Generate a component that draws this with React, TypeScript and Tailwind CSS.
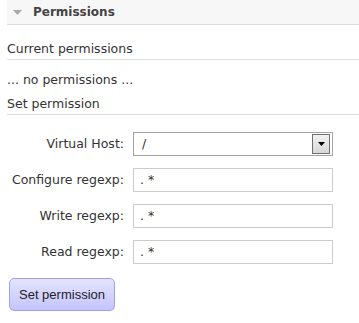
import React from "react";

const font = { fontFamily: '"DejaVu Sans", Verdana, sans-serif' };

function Row({ label, children }: { label: string; children: React.ReactNode }) {
  return (
    <div className="flex items-center h-[24px]">
      <div className="w-[124px] text-right text-[12.5px] text-[#333] whitespace-nowrap">{label}</div>
      <div className="ml-[9px]">{children}</div>
    </div>
  );
}

function Input({ value }: { value: string }) {
  return (
    <div className="w-[200px] h-[24px] border border-[#ccc] bg-white flex items-center pl-[6px] text-[12.5px] text-[#333]">
      {value}
    </div>
  );
}

export default function App() {
  return (
    <div className="w-[359px] h-[323px] bg-white text-[#333]" style={font}>
      <div className="ml-[7px] h-[25px] bg-[#f7f7f7] border-b border-[#ddd] flex items-center">
        <svg width="9" height="6" viewBox="0 0 9 6" className="ml-[6px] mt-[1px]">
          <polygon points="0,0 9,0 4.5,5" fill="#a8a8a8" />
        </svg>
        <span className="ml-[11px] text-[12px] font-bold text-[#444]">Permissions</span>
      </div>
      <div className="ml-[7px] mt-[16px] h-[19px] border-b border-[#ddd] text-[12.5px] leading-[15px]">
        Current permissions
      </div>
      <div className="ml-[7px] mt-[12px] text-[12.5px] leading-[15px]">... no permissions ...</div>
      <div className="ml-[7px] mt-[9px] h-[19px] border-b border-[#ddd] text-[12.5px] leading-[15px]">
        Set permission
      </div>
      <div className="mt-[17px] flex flex-col gap-[12px]">
        <Row label="Virtual Host:">
          <div className="w-[200px] h-[24px] border border-[#a5a5a5] bg-white flex items-center justify-between pl-[8px] pr-[2px] text-[12.5px]">
            <span>/</span>
            <div className="w-[18px] h-[20px] border border-[#707070] bg-gradient-to-b from-[#f2f2f2] to-[#d8d8d8] flex items-center justify-center">
              <svg width="7" height="4" viewBox="0 0 7 4">
                <polygon points="0,0 7,0 3.5,4" fill="#000" />
              </svg>
            </div>
          </div>
        </Row>
        <Row label="Configure regexp:">
          <Input value=". *" />
        </Row>
        <Row label="Write regexp:">
          <Input value=". *" />
        </Row>
        <Row label="Read regexp:">
          <Input value=". *" />
        </Row>
      </div>
      <button
        className="ml-[9px] mt-[14px] w-[106px] h-[33px] rounded-[5px] border border-[#a0a0e8] bg-gradient-to-b from-[#e4e4ff] to-[#c4c4ff] text-[13px] text-[#222]"
        style={{ fontFamily: '"Liberation Sans", Arial, sans-serif' }}
      >
        Set permission
      </button>
    </div>
  );
}
